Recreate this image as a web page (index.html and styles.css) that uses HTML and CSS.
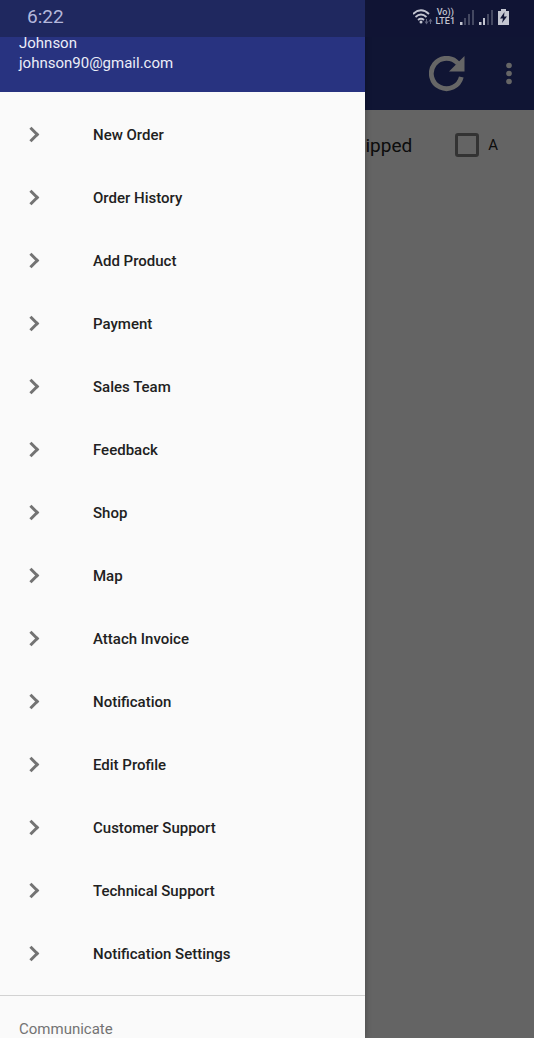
FILE: index.html
```html
<!DOCTYPE html>
<html lang="en">
<head>
    <meta charset="UTF-8">
    <meta name="viewport" content="width=device-width, initial-scale=1.0">
    <title>Orders</title>
    <link rel="stylesheet" href="styles.css">
</head>
<body>
    <!-- Orders screen -->
    <main class="screen">
        <header class="app-bar">
            <button class="icon-btn" aria-label="Refresh">
                <svg width="36" height="36" viewBox="0 0 36 36">
                    <path d="M32.300 21A15.200 15.200 0 1 1 29 7.500" fill="none" stroke="currentColor" stroke-width="4.800"/>
                    <path d="M35.500 0V15.500H20z" fill="currentColor"/>
                </svg>
            </button>
            <button class="icon-btn" aria-label="More options">
                <svg width="8" height="24" viewBox="0 0 8 24" fill="currentColor">
                    <circle cx="4" cy="3.500" r="2.800"/>
                    <circle cx="4" cy="11.500" r="2.800"/>
                    <circle cx="4" cy="19.500" r="2.800"/>
                </svg>
            </button>
        </header>

        <div class="filters">
            <label class="filter filter-large"><input type="checkbox"> Shipped</label>
            <label class="filter"><input type="checkbox"> A</label>
        </div>
    </main>

    <div class="scrim"></div>

    <!-- Navigation drawer -->
    <aside class="drawer">
        <div class="drawer-header">
            <div>Johnson</div>
            <div>johnson90@gmail.com</div>
        </div>
        <nav class="menu">
            <a href="#" class="menu-item">New Order</a>
            <a href="#" class="menu-item">Order History</a>
            <a href="#" class="menu-item">Add Product</a>
            <a href="#" class="menu-item">Payment</a>
            <a href="#" class="menu-item">Sales Team</a>
            <a href="#" class="menu-item">Feedback</a>
            <a href="#" class="menu-item">Shop</a>
            <a href="#" class="menu-item">Map</a>
            <a href="#" class="menu-item">Attach Invoice</a>
            <a href="#" class="menu-item">Notification</a>
            <a href="#" class="menu-item">Edit Profile</a>
            <a href="#" class="menu-item">Customer Support</a>
            <a href="#" class="menu-item">Technical Support</a>
            <a href="#" class="menu-item">Notification Settings</a>
        </nav>
        <div class="menu-group">Communicate</div>
    </aside>

    <!-- Phone status bar -->
    <div class="status-bar">
        <span class="clock">6:22</span>
        <div class="status-icons">
            <div class="connection">
                <svg width="21" height="18" viewBox="0 0 21 18">
                    <g fill="none" stroke="#c3c5d0" stroke-width="1.800">
                        <path d="M0 6Q8 -1.500 16 6"/>
                        <path d="M2.500 9Q8 4 13.500 9"/>
                        <path d="M5 12Q8 9.500 11 12"/>
                    </g>
                    <circle cx="8" cy="14" r="1.500" fill="#c3c5d0"/>
                    <path d="M13.500 16.500L11.500 13.500H13V11H14V13.500H15.500zM17.500 10.500L19.500 13.500H18V16H17V13.500H15.500z" fill="#62657f"/>
                </svg>
                <span class="network">Vo))<br>LTE1</span>
            </div>
            <svg width="14" height="16" viewBox="0 0 14 16">
                <path d="M0 13h2.500v3H0z" fill="#c3c5d0"/>
                <path d="M4 9h2v7H4zM8 5h2v11H8zM12 1h2v15h-2z" fill="#444861"/>
            </svg>
            <svg width="14" height="16" viewBox="0 0 14 16">
                <path d="M0 13h2.500v3H0zM4 9h2v7H4z" fill="#c3c5d0"/>
                <path d="M8 5h2v11H8zM12 1h2v15h-2z" fill="#444861"/>
            </svg>
            <svg width="11" height="16" viewBox="0 0 11 16">
                <path d="M3 0h5v2h3v14H0V2h3z" fill="#c3c5d0"/>
                <path d="M6.500 3L2 9.500h3L4 14l5-6.500H6z" fill="#101434"/>
            </svg>
        </div>
    </div>
</body>
</html>
```
FILE: styles.css
```css
body {
  margin: 0;
  height: 100vh;
  overflow: hidden;
  position: relative;
  font-family: Roboto, 'Liberation Sans', sans-serif;
  color: #212121;
  background-color: #fafafa;
}

.app-bar {
  display: flex;
  align-items: center;
  justify-content: flex-end;
  gap: 40px;
  height: 73px;
  padding: 37px 21px 0 0;
  background-color: #283583;
  color: #ffffff;
}

.icon-btn {
  display: flex;
  padding: 0;
  border: none;
  background: none;
  color: inherit;
  cursor: pointer;
}

.filters {
  display: flex;
  align-items: center;
  justify-content: flex-end;
  gap: 43px;
  height: 70px;
  padding-right: 36px;
}

.filter {
  display: flex;
  align-items: center;
  gap: 9px;
  font-size: 15px;
}

.filter-large {
  font-size: 19px;
}

.filter input {
  appearance: none;
  box-sizing: border-box;
  width: 24px;
  height: 24px;
  margin: 0;
  border: 3px solid #808080;
  border-radius: 3px;
}

.scrim {
  position: absolute;
  inset: 0;
  background-color: rgba(0, 0, 0, 0.6);
}

/* Drawer */
.drawer {
  position: absolute;
  top: 0;
  bottom: 0;
  left: 0;
  width: 68.4%;
  overflow: hidden;
  background-color: #fafafa;
  box-shadow: 0 0 6px rgba(0, 0, 0, 0.3);
}

.drawer-header {
  padding: 33px 19px 19px;
  background-color: #283380;
  color: #eceef8;
  font-size: 15px;
  line-height: 20px;
}

.menu {
  padding: 11px 0 10px;
  border-bottom: 1px solid #d2d2d2;
}

.menu-item {
  display: flex;
  align-items: center;
  gap: 56px;
  height: 63px;
  padding-left: 26px;
  color: #212121;
  font-size: 15px;
  font-weight: 500;
  text-decoration: none;
}

/* chevron */
.menu-item::before {
  content: "";
  box-sizing: border-box;
  width: 11px;
  height: 11px;
  border: solid #737373;
  border-width: 3px 3px 0 0;
  transform: rotate(45deg);
}

.menu-group {
  padding: 23px 19px;
  color: #737373;
  font-size: 15px;
  line-height: 20px;
}

/* Status bar */
.status-bar {
  position: absolute;
  top: 0;
  left: 0;
  right: 0;
  display: flex;
  align-items: center;
  justify-content: space-between;
  height: 37px;
  box-sizing: border-box;
  padding: 0 25px 4px 27px;
  background: linear-gradient(to right, #1f285f 68.4%, #101434 68.4%);
}

.clock {
  color: #b4b8dc;
  font-size: 19px;
}

.status-icons {
  display: flex;
  align-items: center;
  gap: 5px;
}

.connection {
  display: flex;
  align-items: center;
  gap: 2px;
}

.network {
  color: #c3c5d0;
  font-size: 9px;
  font-weight: 500;
  line-height: 9px;
  text-align: center;
}
```
